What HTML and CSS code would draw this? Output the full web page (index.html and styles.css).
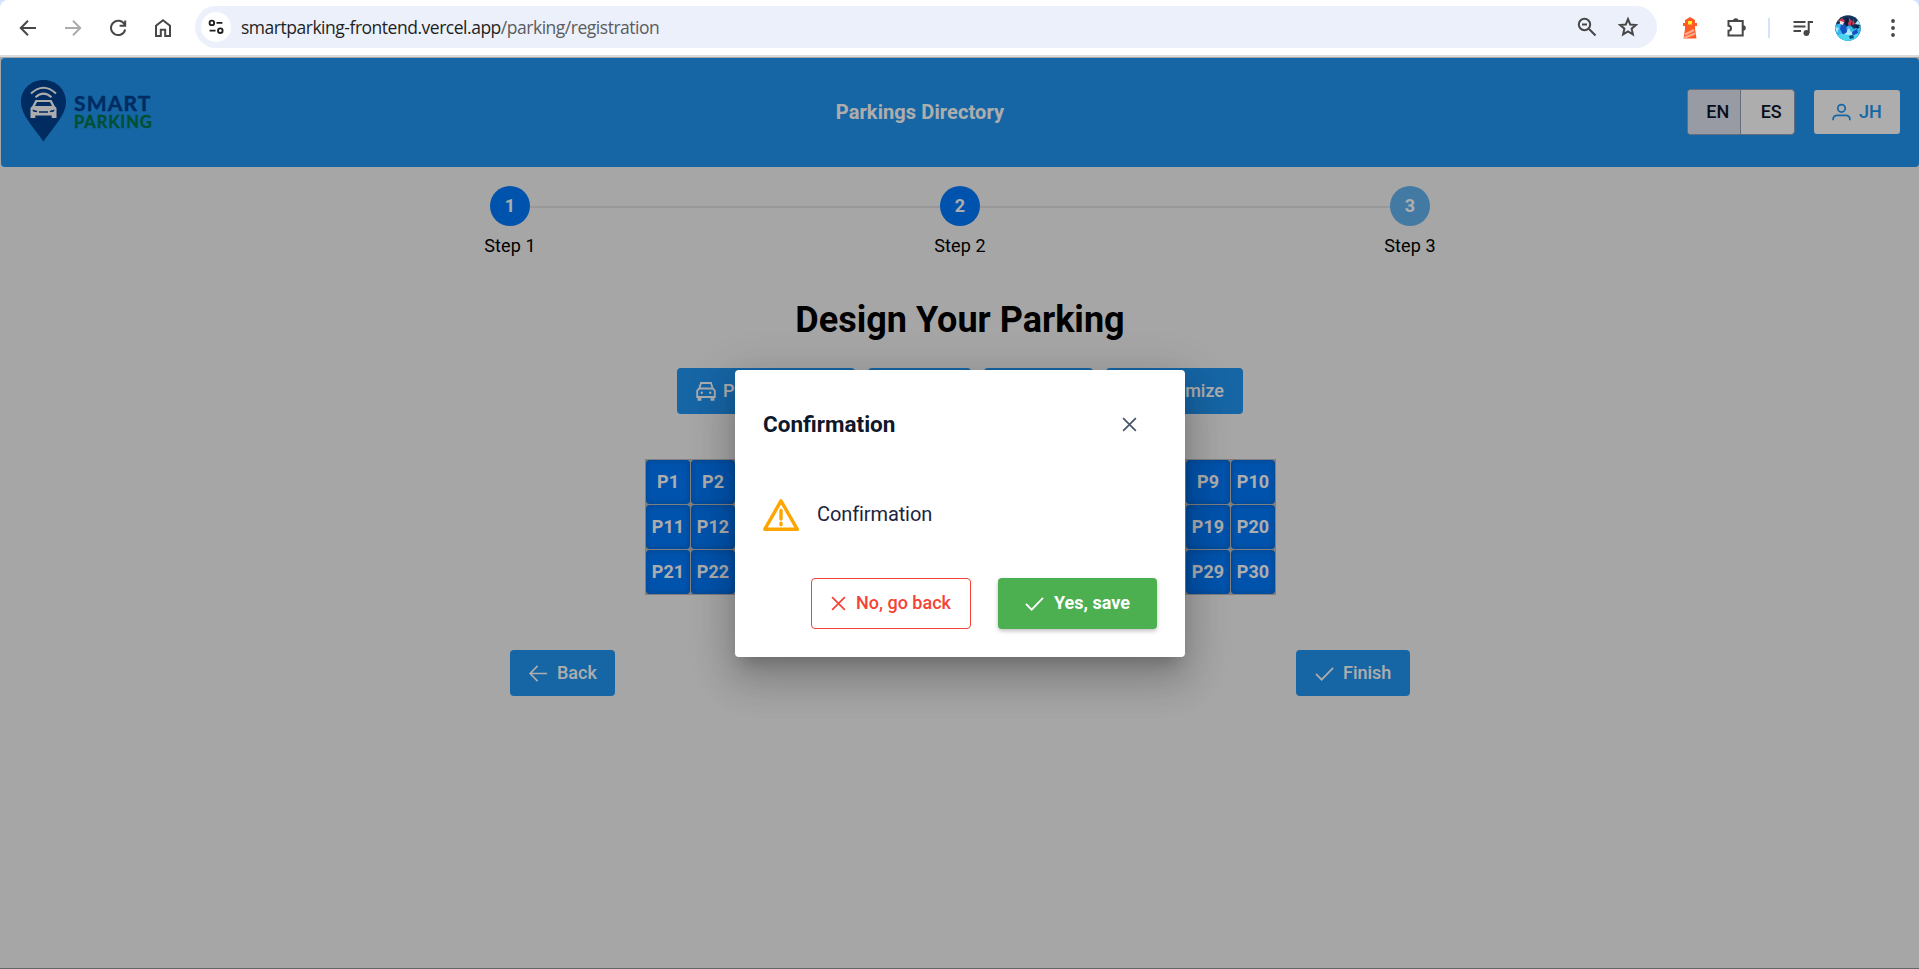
FILE: index.html
```
<!DOCTYPE html>
<html lang="en">
<head>
<meta charset="utf-8">
<title>Smart Parking</title>
<link rel="stylesheet" href="styles.css">
</head>
<body>
<div class="browser">
  <div class="nav-icons">
    <svg class="ic" viewBox="0 0 24 24"><path d="M20 12H5M12 4.8 4.8 12l7.2 7.2"/></svg>
    <svg class="ic dim" viewBox="0 0 24 24"><path d="M4 12h15M12 4.8l7.2 7.2-7.2 7.2"/></svg>
    <svg class="ic" viewBox="0 0 24 24"><path d="M18.600 8.600A7.200 7.200 0 1 0 19.200 13.500M19.200 4.500v5.300h-5.600"/></svg>
    <svg class="ic" viewBox="0 0 24 24"><path d="M5 20V9.700l7-5.500 7 5.500V20h-4.800v-6.200H9.800V20z"/></svg>
  </div>
  <div class="omnibox">
    <span class="site-info"><svg class="ic tune" viewBox="0 0 24 24"><circle cx="7.500" cy="7.500" r="2.500"/><path d="M12.500 7.500H19M5 16h6.500"/><circle cx="16.700" cy="16" r="2.500"/></svg></span>
    <span class="url">smartparking-frontend.vercel.app<span class="path">/parking/registration</span></span>
    <svg class="ic zoom-ic" viewBox="0 0 24 24"><circle cx="9.500" cy="9.500" r="5.700"/><path d="m13.800 13.800 6.700 6.700M7 9.500h5"/></svg>
    <svg class="ic star" viewBox="0 0 24 24"><path d="m12 4.200 2.200 5.300 5.700.500-4.300 3.700 1.300 5.600-4.900-3-4.900 3 1.300-5.600L4.100 10l5.700-.500z"/></svg>
  </div>
  <svg class="lighthouse" viewBox="0 0 16 22"><path fill="#ff5a26" d="M8 0 13 3v3h2v3h-2v3l1.500 9.500h-13L3 12V9H1V6h2V3z"/><path fill="#fff12b" d="M6 4h4v3.500H6z"/><path d="m3 17.500 9-4.500M2 21l11-4.500" stroke="#ffab91" stroke-width="2"/></svg>
  <svg class="ic puzzle" viewBox="0 0 24 24"><path d="M4.500 5h14.200v14.500H4.500v-4.700a2.500 2.500 0 0 0 0-5z"/><path class="solid" d="M9 5a2.800 2.800 0 0 1 5.600 0zM19 9.200a2.800 2.800 0 0 1 0 5.600z"/></svg>
  <span class="bar-sep"></span>
  <svg class="ic media" viewBox="0 0 24 24"><path d="M2.500 6h12M2.500 10.500h12M2.500 15H10M17.700 17V6.100H22"/><circle class="solid" cx="15.400" cy="17" r="2.900"/></svg>
  <svg class="avatar" viewBox="0 0 26 26"><defs><clipPath id="round"><circle cx="13" cy="13" r="12.700"/></clipPath></defs><g clip-path="url(#round)"><path fill="#12345c" d="M0 0h26v26H0z"/><path fill="#35b6ec" d="m0 10 6-2 2 5 7-3 4 4 7-4v16H0z"/><path fill="#a9e9fb" d="m5 20 6-3 3-4 2 4 6-2-4 5zM0 12l4 1-2 5zM20 9l3-4 3 5z"/><path fill="#1651c4" d="m6 9 5 1 1 7-4 3-3-6zM17 17l5-3 1 4-5 4z"/><path fill="#d6344a" d="m3 6 4-3 3 3-3 3zM14 3l3 3-2 6-2-3zM18 4l2 5-3 1z"/><path fill="#f4e6e6" d="m5 6 4 1-1 3-3-1z"/><path fill="#071b3c" d="m11 2 3 3-2 7-2-3zM20 10l5 2-3 2z"/><path fill="#48d5ef" d="m3 20 6-1 8 2 6-3v8H3z"/><path fill="#0d4c7c" d="m14 21 4-1 1 3-4 1z"/></g></svg>
  <svg class="ic dots" viewBox="0 0 24 24"><circle class="solid" cx="12" cy="5" r="1.900"/><circle class="solid" cx="12" cy="12" r="1.900"/><circle class="solid" cx="12" cy="19" r="1.900"/></svg>
</div>
<div class="page">
  <header class="topbar">
    <div class="brand">
      <svg class="pin" viewBox="0 0 45 62"><path fill="#004191" d="M22.500 0C9.500 0 0 9.600 0 22c0 12 10 22 22.500 39.500C35 44 45 34 45 22 45 9.600 35.500 0 22.500 0z"/><path d="M10 13.500Q22.500 2 35 13.500M14.500 17.200q8-7.200 16 0" fill="none" stroke="#fff" stroke-width="2"/><path fill="#fff" d="m14.500 20-3.200 6-1.800 2v10h4.800v-2.500h16.400V38h4.800V28l-1.800-2-3.200-6z"/><path fill="#004191" d="M16 22h13l2 4H14zM11.500 29.500l5 1.500-1 1.200-3.500-.7zM33.500 29.500l-5 1.500 1 1.200 3.500-.7zM18 31.300h9v1.400h-9z"/></svg>
      <div class="brand-text"><span class="b1">SMART</span><span class="b2">PARKING</span></div>
    </div>
    <h1 class="title">Parkings Directory</h1>
    <div class="actions">
      <div class="lang"><span class="on">EN</span><span>ES</span></div>
      <div class="user"><svg viewBox="0 0 20 20"><circle cx="10" cy="5.600" r="3.900"/><path d="M1.200 18.200v-1c0-2.600 2-4.200 4.700-4.200h8.200c2.700 0 4.700 1.600 4.700 4.200v1"/></svg><span>JH</span></div>
    </div>
  </header>
  <div class="steps">
    <div class="step"><b>1</b><span>Step 1</span></div>
    <i class="line"></i>
    <div class="step"><b>2</b><span>Step 2</span></div>
    <i class="line"></i>
    <div class="step next"><b>3</b><span>Step 3</span></div>
  </div>
  <h2 class="heading">Design Your Parking</h2>
  <div class="tools">
    <div class="btn t1"><svg viewBox="0 0 20 20"><path d="m3.300 7.500 1.700-5.500h10l1.700 5.500M1.200 16V9.500l2-2h13.600l2 2V16zM2.500 16v2.800h2V16M15.500 16v2.800h2V16"/><circle class="fillc" cx="5.800" cy="11.800" r="1.200"/><circle class="fillc" cx="14.200" cy="11.800" r="1.200"/></svg><span>Parking</span></div>
    <div class="btn t2"></div>
    <div class="btn t3"></div>
    <div class="btn t4"><span>Customize</span></div>
  </div>
  <div class="lot">
    <div class="row"><i>P1</i><i>P2</i><i></i><i></i><i></i><i></i><i></i><i></i><i></i><i></i><i></i><i></i><i>P9</i><i>P10</i></div>
    <div class="row"><i>P11</i><i>P12</i><i></i><i></i><i></i><i></i><i></i><i></i><i></i><i></i><i></i><i></i><i>P19</i><i>P20</i></div>
    <div class="row"><i>P21</i><i>P22</i><i></i><i></i><i></i><i></i><i></i><i></i><i></i><i></i><i></i><i></i><i>P29</i><i>P30</i></div>
  </div>
  <div class="footer">
    <div class="btn back"><svg viewBox="0 0 20 20"><path d="M19 10H1.500M9 2 1.200 10 9 18"/></svg><span>Back</span></div>
    <div class="btn finish"><svg viewBox="0 0 20 20"><path d="m1 10.500 6 6L19 4"/></svg><span>Finish</span></div>
  </div>
  <div class="mask">
    <div class="dialog">
      <div class="dialog-head"><span>Confirmation</span><svg viewBox="0 0 16 16"><path d="m1.200 1.200 13.600 13.600M14.800 1.200 1.200 14.800"/></svg></div>
      <div class="dialog-body"><svg viewBox="0 0 36 32"><path d="M18 1.900 34.300 30.300H1.700z"/><path d="M18 11.500v8.500M18 24.300v1.400"/></svg><span>Confirmation</span></div>
      <div class="dialog-foot">
        <div class="no"><svg viewBox="0 0 16 16"><path d="m1.200 1.200 13.600 13.600M14.800 1.200 1.200 14.800"/></svg><span>No, go back</span></div>
        <div class="yes"><svg viewBox="0 0 20 20"><path d="m1 10.500 6 6L19 4"/></svg><span>Yes, save</span></div>
      </div>
    </div>
  </div>
</div>
</body>
</html>
```
FILE: styles.css
```
* { box-sizing: border-box; }
body { margin: 0; height: 969px; overflow: hidden; display: flex; flex-direction: column; font-family: Roboto, sans-serif; font-size: 18px; background: #d3e3fd; }
svg { display: block; flex: none; fill: none; stroke: currentColor; stroke-width: 1.8; }
i { font-style: normal; }

.browser { height: 57px; flex: none; display: flex; align-items: center; background: #fff; border-bottom: 2px solid #dcdcdc; border-radius: 8px 8px 0 0; padding: 0 14px; color: #474747; }
.ic { width: 24px; height: 24px; stroke-width: 2; }
.ic.dim { color: #ababab; }
.solid { fill: currentColor; stroke: none; }
.nav-icons { display: flex; gap: 21px; padding-left: 2px; }
.omnibox { margin-left: 20px; width: 1462px; height: 42px; margin-top: -1px; border-radius: 21px; background: #ebf0fa; display: flex; align-items: center; padding: 0 17px 0 6px; }
.site-info { width: 30px; height: 30px; border-radius: 50%; background: #fff; display: grid; place-items: center; }
.tune { width: 22px; height: 22px; color: #1f1f1f; }
.url { margin-left: 10px; flex: 1; font-family: "Open Sans", "Noto Sans", sans-serif; font-size: 17.5px; letter-spacing: -0.48px; color: #1f1f1f; white-space: nowrap; }
.path { color: #5a5c60; }
.zoom-ic { margin-right: 0; }
.omnibox .ic { position: relative; }
.star { margin-left: 17px; }
.omnibox { width: 1464px; }
.lighthouse { width: 16px; height: 22px; margin-left: 25px; stroke: none; }
.puzzle { margin-left: 26px; }
.bar-sep { width: 2px; height: 20px; background: #d3e3fd; margin-left: 20px; }
.media { margin-left: 21px; }
.avatar { width: 26px; height: 26px; stroke: none; margin-left: 20px; }
.dots { margin-left: 20px; }

.page { position: relative; flex: 1; background: #f5f5f5; border-bottom: 1px solid #666; padding: 1px 0 0 1px; }
.topbar { height: 109px; border-radius: 4px; background: #2196f3; display: flex; justify-content: space-between; align-items: center; padding: 0 19px 0 20px; color: #fff; }
.brand { display: flex; align-items: center; gap: 8px; width: 132px; }
.pin { width: 45px; height: 62px; stroke: none; margin-top: -4px; }
.brand-text { display: flex; flex-direction: column; gap: 1px; font-family: Lato, sans-serif; font-weight: 900; }
.b1 { font-size: 21px; line-height: 18px; color: #004191; letter-spacing: 1.2px; font-weight: 700; -webkit-text-stroke: .4px; }
.b2 { font-size: 16.5px; line-height: 18px; color: #007548; letter-spacing: 0.9px; font-weight: 700; -webkit-text-stroke: .3px; }
.title { margin: -2px 0 0; font-size: 20px; letter-spacing: 0.1px; font-weight: 700; }
.actions { display: flex; align-items: center; justify-content: flex-end; gap: 19px; font-weight: 500; margin-top: -1px; }
.lang { display: flex; width: 108px; height: 46px; border: 1px solid #94a3b8; border-radius: 4px; background: #fff; color: #0f172a; overflow: hidden; }
.lang span { flex: 1; display: grid; place-items: center; padding: 0 0 2px 7px; }
.lang .on { background: #e0e5f0; border-right: 1px solid #94a3b8; }
.user { width: 86px; height: 44px; border-radius: 3px; background: #fff; color: #2196f3; display: flex; align-items: center; justify-content: center; gap: 8px; }
.user svg { width: 19px; height: 19px; }

.steps { width: 960px; margin: 19px 0 0 479px; display: flex; }
.step { width: 60px; display: flex; flex-direction: column; align-items: center; color: #000; }
.step b { width: 40px; height: 40px; border-radius: 50%; background: #007bff; color: #fff; display: grid; place-items: center; padding-bottom: 1px; }
.step span { margin-top: 9px; line-height: 22px; white-space: nowrap; letter-spacing: 0.1px; }
.step.next b { background: #62b4f0; }
.line { flex: 1; height: 2px; margin: 20px -10px 0; background: #e0e0e0; }
.heading { margin: 42px 0 0; text-align: center; font-size: 36px; line-height: 42px; font-weight: 700; color: #000; }
.btn { height: 46px; border-radius: 4px; background: #2196f3; color: #fff; font-weight: 500; display: flex; align-items: center; gap: 9px; padding: 0 19px; }
.btn svg { width: 19px; height: 19px; }
.btn span, .no span, .yes span, .user span { padding-bottom: 2px; }
.fillc { fill: currentColor; stroke: none; }
.tools { margin: 27px 0 0 676px; display: flex; gap: 13px; }
.t1 { width: 178px; gap: 7px; }
.t1 svg { width: 20px; height: 20px; }
.t2 { width: 103px; }
.t3 { width: 109px; }
.t4 { width: 137px; justify-content: flex-end; }
.lot { margin: 45px 0 0 644px; width: 631px; border: 1px solid #bbb; }
.row { display: flex; gap: 1px; background: #bbb; }
.row + .row { border-top: 1px solid #bbb; }
.row i { width: 44px; height: 44px; border-radius: 4px; background: #007bff; box-shadow: inset 0 0 6px rgba(0,0,0,.2), 0 0 0 .5px #bbb; color: #fff; font-weight: 700; display: grid; place-items: center; padding-bottom: 2px; }
.footer { margin: 55px 0 0 509px; width: 900px; display: flex; justify-content: space-between; }
.back { width: 105px; }
.finish { width: 114px; }

.mask { position: absolute; inset: 0; background: rgba(0,0,0,.32); display: flex; justify-content: center; align-items: flex-start; padding-top: 313px; padding-left: 1px; }
.dialog { width: 450px; height: 287px; border-radius: 4px; background: #fff; box-shadow: 0 11px 15px -7px rgba(0,0,0,.2), 0 24px 38px 3px rgba(0,0,0,.14), 0 9px 46px 8px rgba(0,0,0,.12); color: #1b2540; padding: 0 28px; }
.dialog-head { display: flex; align-items: center; justify-content: space-between; height: 54px; margin-top: 27px; padding-right: 20px; font-size: 22.5px; font-weight: 700; color: #0f172a; }
.dialog-head span { padding-bottom: 1px; }
.dialog-head svg { width: 15px; height: 15px; color: #475569; }
.dialog-body { display: flex; align-items: center; gap: 18px; height: 54px; margin-top: 37px; font-size: 20px; letter-spacing: -0.1px; }
.dialog-body span { padding-bottom: 2px; }
.dialog-body svg { width: 36px; height: 32px; color: #ffa500; stroke-width: 3.400; stroke-linejoin: round; stroke-linecap: round; }
.dialog-foot { display: flex; justify-content: flex-end; gap: 27px; margin-top: 36px; font-weight: 500; }
.no, .yes { height: 51px; width: 160px; border-radius: 4px; display: flex; align-items: center; justify-content: center; gap: 10px; }
.no { border: 1px solid #f44336; color: #f44336; }
.no svg { width: 15px; height: 15px; }
.yes { width: 159px; background: #4caf50; color: #fff; font-weight: 700; box-shadow: 0 2px 4px rgba(0,0,0,.25); }
.yes svg { width: 19px; height: 19px; }
```
